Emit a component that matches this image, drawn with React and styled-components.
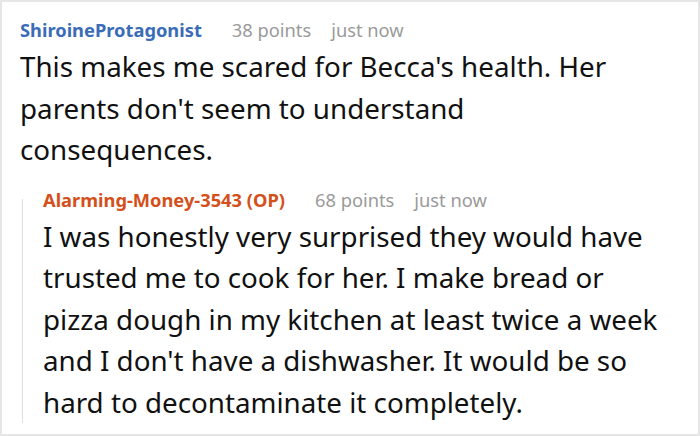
import React from 'react';
import styled, { createGlobalStyle } from 'styled-components';

const GlobalStyle = createGlobalStyle`
  html, body {
    margin: 0;
    padding: 0;
    background: #fff;
  }
`;

const Frame = styled.div`
  box-sizing: border-box;
  width: 700px;
  height: 436px;
  overflow: hidden;
  border: 2px solid #e6e6e6;
  padding: 16px 38px 0 18px;
  font-family: "Noto Sans", "Open Sans", sans-serif;
  color: #111;
`;

const Comment = styled.div`
  display: flex;
  flex-direction: column;
`;

const Reply = styled.div`
  margin: 28px 0 0 2px;
  padding: 0 0 0 20px;
  border-left: 1px solid #dedede;
`;

const Meta = styled.div`
  display: flex;
  align-items: baseline;
  gap: 20px;
  font-size: 18.3px;
  line-height: 24px;
  color: #9a9a9a;
  white-space: nowrap;
  margin-top: ${(p) => (p.$nested ? '-11px' : '0')};
`;

const Author = styled.span`
  font-weight: 700;
  color: ${(p) => (p.$op ? '#d4501b' : '#3a6cb7')};
  margin-right: 10px;
`;

const Body = styled.p`
  margin: 4px 0 0;
  font-size: 27.75px;
  line-height: 41.5px;
  color: #111;
`;

const App = () => (
  <>
    <GlobalStyle />
    <Frame>
      <Comment>
        <Meta>
          <Author>ShiroineProtagonist</Author>
          <span>38 points</span>
          <span>just now</span>
        </Meta>
        <Body>
          This makes me scared for Becca's health. Her parents don't seem to understand consequences.
        </Body>
        <Reply>
          <Meta $nested>
            <Author $op>Alarming-Money-3543 (OP)</Author>
            <span>68 points</span>
            <span>just now</span>
          </Meta>
          <Body>
            I was honestly very surprised they would have trusted me to cook for her. I make bread or
            pizza dough in my kitchen at least twice a week and I don't have a dishwasher. It would be
            so hard to decontaminate it completely.
          </Body>
        </Reply>
      </Comment>
    </Frame>
  </>
);

export default App;
